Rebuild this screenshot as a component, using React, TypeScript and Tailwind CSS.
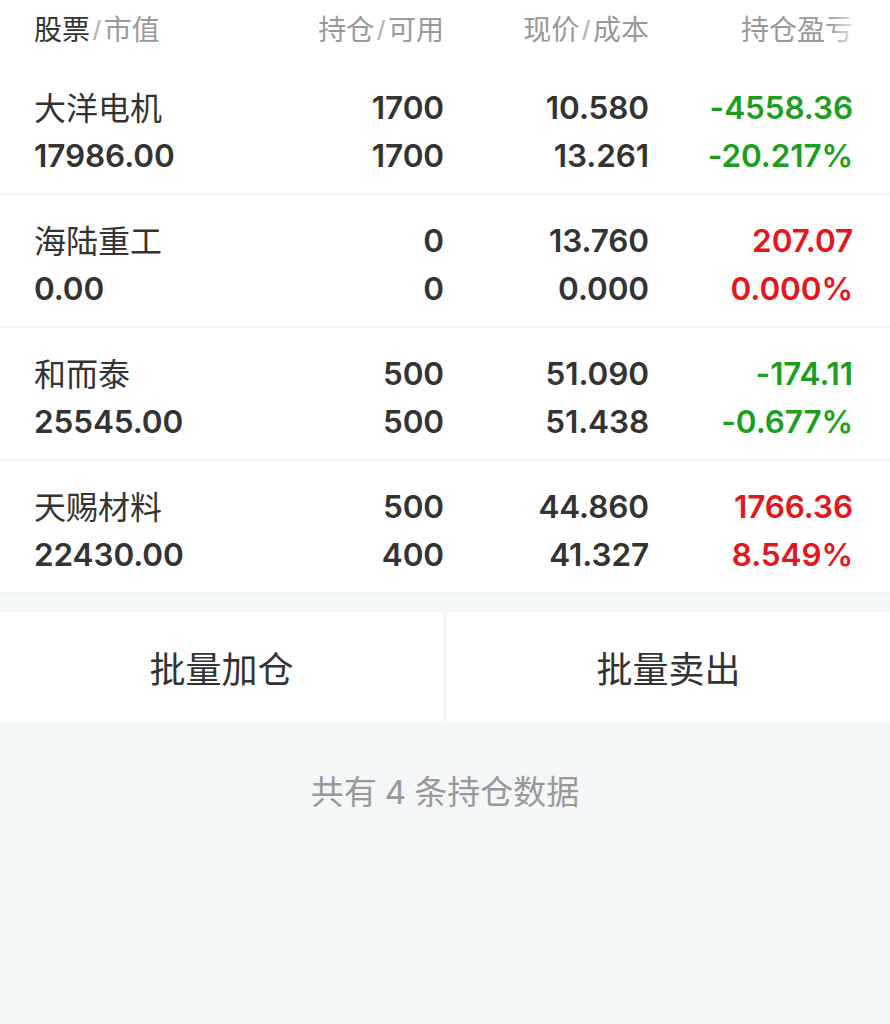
interface Position {
  name: string;
  value: string;
  hold: string;
  avail: string;
  price: string;
  cost: string;
  pnl: string;
  pct: string;
  up: boolean;
}

const POSITIONS: Position[] = [
  { name: '大洋电机', value: '17986.00', hold: '1700', avail: '1700', price: '10.580', cost: '13.261', pnl: '-4558.36', pct: '-20.217%', up: false },
  { name: '海陆重工', value: '0.00', hold: '0', avail: '0', price: '13.760', cost: '0.000', pnl: '207.07', pct: '0.000%', up: true },
  { name: '和而泰', value: '25545.00', hold: '500', avail: '500', price: '51.090', cost: '51.438', pnl: '-174.11', pct: '-0.677%', up: false },
  { name: '天赐材料', value: '22430.00', hold: '500', avail: '400', price: '44.860', cost: '41.327', pnl: '1766.36', pct: '8.549%', up: true },
];

const CJK = "font-['Noto_Sans_CJK_SC',sans-serif]";
const NUM = "font-['Inter','Noto_Sans_CJK_SC',sans-serif] font-[560] text-[31.5px] tracking-[-0.1px]";

function Slash() {
  return <span className="mx-[3px] font-['Liberation_Sans',sans-serif] font-light text-[#b3b3b3]">/</span>;
}

export default function App() {
  return (
    <div className={`w-[890px] h-[1024px] bg-[#f4f7f8] text-[#333] ${CJK}`}>
      <div className="bg-white">
        {/* header */}
        <div className="relative flex h-[62px] items-start pt-[4px] pl-[34px] pr-[37px] text-[28px] leading-[48px] text-[#999]">
          <div className="w-[240px]">
            <span className="text-[#333]">股票</span>
            <Slash />
            <span>市值</span>
          </div>
          <div className="w-[170px] text-right">
            持仓<Slash />可用
          </div>
          <div className="w-[205px] text-right">
            现价<Slash />成本
          </div>
          <div className="w-[204px] text-right">持仓盈亏</div>
          <div className="pointer-events-none absolute right-0 top-0 h-full w-[62px] bg-gradient-to-r from-white/0 via-white/90 to-white" />
        </div>

        {POSITIONS.map((p) => {
          const color = p.up ? 'text-[#e4151c]' : 'text-[#1c9f1c]';
          return (
            <div key={p.name} className="flex h-[133px] border-b-2 border-[#f1f3f4] pt-[22px] pl-[34px] pr-[37px] leading-[48px]">
              <div className="w-[240px]">
                <div className="-mt-[2px] mb-[2px] text-[32px]">{p.name}</div>
                <div className={NUM}>{p.value}</div>
              </div>
              <div className={`w-[170px] text-right ${NUM}`}>
                <div>{p.hold}</div>
                <div>{p.avail}</div>
              </div>
              <div className={`w-[205px] text-right ${NUM}`}>
                <div>{p.price}</div>
                <div>{p.cost}</div>
              </div>
              <div className={`w-[204px] text-right ${NUM} ${color}`}>
                <div>{p.pnl}</div>
                <div>{p.pct}</div>
              </div>
            </div>
          );
        })}
      </div>

      <div className="mt-[18px] flex gap-[4px]">
        <button className="flex h-[110px] w-[443px] items-center justify-center bg-white text-[36px] text-[#333]">
          批量加仓
        </button>
        <button className="flex h-[110px] flex-1 items-center justify-center bg-white text-[36px] text-[#333]">
          批量卖出
        </button>
      </div>

      <div className="pt-[44px] text-center text-[33px] leading-[48px] text-[#999]">
        共有<span className="mx-[8px] font-['Inter',sans-serif]">4</span>条持仓数据
      </div>
    </div>
  );
}
